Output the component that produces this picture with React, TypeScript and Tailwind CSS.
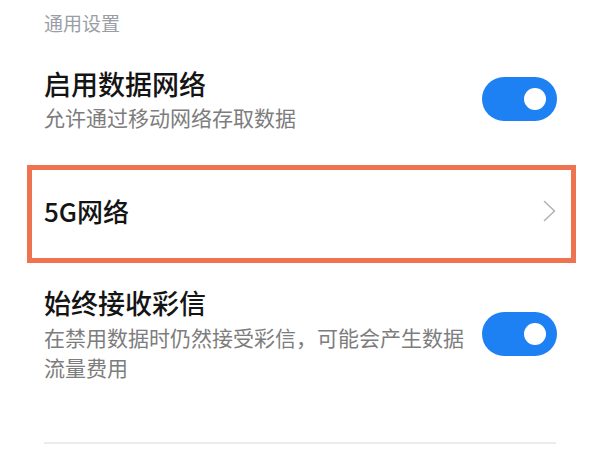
const FONT = "font-['Noto_Sans_CJK_SC','Noto_Sans',sans-serif]";

function Toggle() {
  return (
    <div className="flex h-[44px] w-[75px] shrink-0 items-center justify-end rounded-full bg-[#1d80f3] pr-[11px]">
      <div className="h-[22px] w-[22px] rounded-full bg-white" />
    </div>
  );
}

function ChevronRight() {
  return (
    <svg width="13" height="22" viewBox="0 0 13 22" fill="none">
      <polyline points="1.5,1.5 11.5,11 1.5,20.5" stroke="#b3b3b3" strokeWidth="1.6" strokeLinejoin="round" strokeLinecap="round" />
    </svg>
  );
}

export default function App() {
  return (
    <div className={`h-[450px] w-[600px] overflow-hidden bg-white ${FONT}`}>
      {/* Section header */}
      <div className="px-[44px] pt-[9px] text-[19px] leading-[28px] text-[#9a9da5]">通用设置</div>

      {/* Enable data network */}
      <div className="mt-[29px] flex items-center justify-between pl-[44px] pr-[43px]">
        <div className="flex flex-col">
          <div className="text-[27px] font-medium leading-[36px] text-[#141414]">启用数据网络</div>
          <div className="text-[21px] leading-[30px] text-[#7d7d7d]">允许通过移动网络存取数据</div>
        </div>
        <Toggle />
      </div>

      {/* 5G network (highlighted) */}
      <div className="ml-[27px] mt-[33px] flex h-[98px] w-[549px] items-center justify-between border-[5px] border-[#ef7351] pb-[6px] pl-[12px] pr-[15px]">
        <div className="text-[26px] font-medium leading-[36px] text-[#141414]">5G网络</div>
        <ChevronRight />
      </div>

      {/* Always receive MMS */}
      <div className="mt-[22px] flex items-center justify-between pl-[44px] pr-[43px]">
        <div className="flex max-w-[430px] flex-col">
          <div className="text-[27px] font-medium leading-[36px] text-[#141414]">始终接收彩信</div>
          <div className="mt-[1px] text-[21px] leading-[30px] text-[#7d7d7d]">
            在禁用数据时仍然接受彩信，可能会产生数据流量费用
          </div>
        </div>
        <Toggle />
      </div>

      <div className="mx-[44px] mt-[60px] h-[2px] bg-[#ececec]" />
    </div>
  );
}
